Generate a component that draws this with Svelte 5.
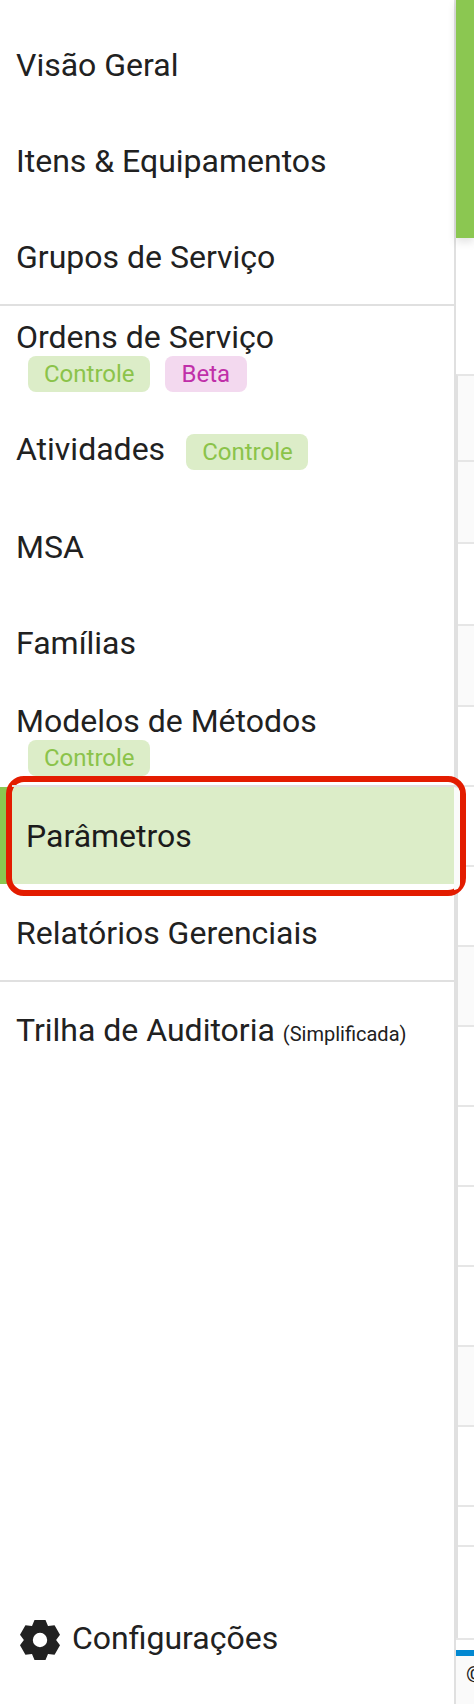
<script lang="ts">
	const rowTints = [true, true, false, true, false, false, false, true, false, false, false, false, true, false, false];
	const rowHeights = [84, 82, 82, 81, 80, 80, 80, 80, 80, 80, 80, 80, 80, 80, 40, 93];

	// six teeth: each one goes base, tip, tip, base, the next tooth closes the valley
	const tooth = [[14, -8], [20, -5.5], [20, 5.5], [14, 8]];
	const gearPath = [0, 60, 120, 180, 240, 300]
		.map((deg) => {
			const a = (deg * Math.PI) / 180;
			return tooth
				.map(([r, w]) => {
					const x = 20 + w * Math.cos(a) + r * Math.sin(a);
					const y = 20 + w * Math.sin(a) - r * Math.cos(a);
					return `${x.toFixed(2)} ${y.toFixed(2)}`;
				})
				.join('L');
		})
		.join('L');
</script>

<div class="page">
	<aside class="sidebar">
		<nav class="nav">
			<a class="item">Visão Geral</a>
			<a class="item">Itens &amp; Equipamentos</a>
			<a class="item short">Grupos de Serviço</a>
			<hr class="divider" />

			<a class="item stacked">
				<span>Ordens de Serviço</span>
				<span class="badges">
					<span class="badge green">Controle</span>
					<span class="badge purple">Beta</span>
				</span>
			</a>
			<a class="item inline">
				<span>Atividades</span>
				<span class="badge green far">Controle</span>
			</a>
			<a class="item">MSA</a>
			<a class="item">Famílias</a>
			<a class="item stacked tight">
				<span>Modelos de Métodos</span>
				<span class="badges">
					<span class="badge green">Controle</span>
				</span>
			</a>
			<a class="item active">Parâmetros</a>
			<a class="item nudge">Relatórios Gerenciais</a>
			<hr class="divider" />

			<a class="item inline trail">
				<span>Trilha de Auditoria</span>
				<small>(Simplificada)</small>
			</a>
		</nav>

		<a class="settings">
			<svg viewBox="0 0 40 40" width="40" height="40" aria-hidden="true">
				<path
					fill-rule="evenodd"
					d="M{gearPath}ZM20 12.8a7.2 7.2 0 1 0 0 14.4a7.2 7.2 0 1 0 0-14.4Z"
				/>
			</svg>
			<span>Configurações</span>
		</a>
	</aside>

	<main class="main">
		<div class="toolbar"></div>
		<div class="toolbar-gap"></div>
		<div class="rows">
			{#each rowHeights as height, i}
				<div class="row" class:tint={rowTints[i]} style="height: {height}px"></div>
			{/each}
		</div>
		<footer class="footer">
			<div class="footer-bar">©</div>
		</footer>
	</main>

	<!-- annotation drawn over the active menu entry -->
	<div class="highlight"></div>
</div>

<style>
	:global(body) {
		margin: 0;
		background: #fff;
	}

	.page {
		position: relative;
		display: flex;
		width: 474px;
		height: 1704px;
		overflow: hidden;
		font-family: Roboto, "Liberation Sans", sans-serif;
		color: #212121;
	}

	.sidebar {
		box-sizing: border-box;
		flex: 0 0 456px;
		display: flex;
		flex-direction: column;
		justify-content: space-between;
		border-right: 2px solid #e0e0e0;
		padding-top: 17px;
	}

	.item {
		box-sizing: border-box;
		display: flex;
		align-items: center;
		height: 96px;
		padding: 0 16px;
		font-size: 32px;
		line-height: 34px;
		white-space: nowrap;
	}

	.item.short {
		height: 95px;
	}

	.item.nudge {
		padding-top: 2px;
	}

	.item.stacked {
		flex-direction: column;
		align-items: flex-start;
		justify-content: flex-start;
		padding-top: 14px;
	}

	.item.stacked.tight {
		padding-top: 13px;
	}

	.item.inline {
		align-items: baseline;
		height: 97px;
		padding-top: 30px;
	}

	.item.inline.trail {
		padding-top: 31px;
	}

	.item.active {
		height: 97px;
		border-left: 10px solid #8bc751;
		background: #dcedc8;
		color: #1b1b1b;
	}

	.divider {
		height: 2px;
		margin: 0;
		border: 0;
		background: #e0e0e0;
	}

	.badges {
		display: flex;
		gap: 15px;
		margin: 2px 0 0 12px;
	}

	.badge {
		box-sizing: border-box;
		display: inline-block;
		height: 36px;
		padding: 0 15px 0 16px;
		border-radius: 8px;
		font-size: 24px;
		line-height: 36px;
	}

	.badge.green {
		background: #dcedc8;
		color: #8bc34a;
	}

	.badge.purple {
		padding: 0 17px;
		background: #f3d9ef;
		color: #c02fa9;
	}

	.badge.far {
		margin-left: 21px;
	}

	small {
		margin-left: 8px;
		font-size: 20px;
	}

	.settings {
		display: flex;
		align-items: center;
		gap: 12px;
		margin-bottom: 42px;
		padding-left: 20px;
		font-size: 32px;
		line-height: 40px;
	}

	.settings span {
		padding-bottom: 4px;
	}

	.settings svg {
		flex: none;
		fill: #212121;
	}

	.main {
		flex: 1;
		display: flex;
		flex-direction: column;
		min-width: 0;
	}

	.toolbar {
		flex: none;
		height: 238px;
		background: #8bc751;
		box-shadow: 0 4px 10px rgba(0, 0, 0, 0.12);
	}

	.toolbar-gap {
		flex: none;
		height: 136px;
	}

	.rows {
		flex: none;
		border-top: 2px solid #e6e6e6;
		border-left: 2px solid #e0e0e0;
	}

	.row {
		box-sizing: border-box;
	}

	.row + .row {
		border-top: 2px solid #e6e6e6;
	}

	.row.tint {
		background: #fafafa;
	}

	.footer {
		flex: 1;
		border-top: 2px solid #e6e6e6;
		padding-top: 10px;
	}

	.footer-bar {
		box-sizing: border-box;
		height: 100%;
		border-top: 6px solid #0288d1;
		padding: 6px 0 0 10px;
		background: #fafafa;
		font-size: 22px;
		line-height: 26px;
		white-space: nowrap;
	}

	.highlight {
		position: absolute;
		top: 776px;
		left: 6px;
		box-sizing: border-box;
		width: 460px;
		height: 120px;
		border: 6px solid #e31c00;
		border-radius: 18px;
		pointer-events: none;
	}

	/* hairline along the top inside the ring */
	.highlight::before {
		content: '';
		position: absolute;
		top: 3px;
		left: 0;
		width: 442px;
		height: 2px;
		background: #e0e0e0;
	}

	/* the ring hides the pane borders on its right side */
	.highlight::after {
		content: '';
		position: absolute;
		top: 5px;
		bottom: 0;
		left: 442px;
		right: 0;
		border-radius: 0 12px 12px 0;
		background: #fbfbfb;
	}
</style>
